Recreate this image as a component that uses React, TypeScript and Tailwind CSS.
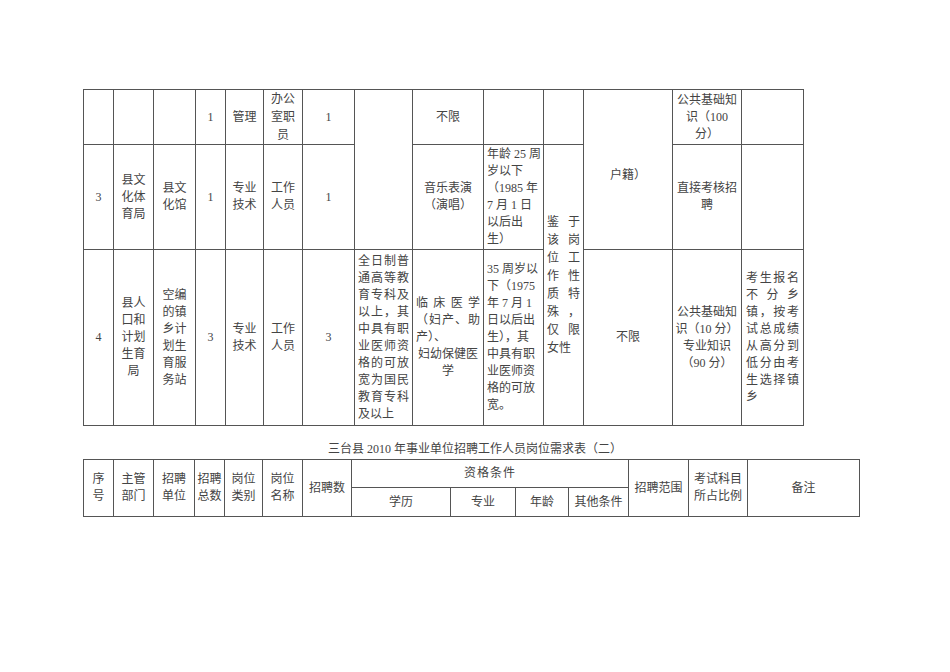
import React from 'react'

type CellProps = {
  children?: React.ReactNode
  rowSpan?: number
  colSpan?: number
  className?: string
}

// one bordered table cell, centred both ways by default
function Cell({ children, rowSpan, colSpan, className = '' }: CellProps) {
  return (
    <td
      rowSpan={rowSpan}
      colSpan={colSpan}
      className={`border border-[#555] p-0 align-middle text-center ${className}`}
    >
      {children}
    </td>
  )
}

// lines split on "/"
function Lines({ text }: { text: string }) {
  return (
    <>
      {text.split('/').map((l, i) => (
        <div key={i} className="whitespace-pre">
          {l}
        </div>
      ))}
    </>
  )
}

// justified lines, the last one left as in Word
function Justified({ text, className = '' }: { text: string; className?: string }) {
  const lines = text.split('/')
  return (
    <div className={className}>
      {lines.map((l, i) =>
        i === lines.length - 1 ? (
          <div key={i} className="text-left">
            {l}
          </div>
        ) : (
          <div key={i} className="flex justify-between">
            {[...l].map((c, j) => (
              <span key={j}>{c}</span>
            ))}
          </div>
        )
      )}
    </div>
  )
}

export default function App() {
  return (
    <div className="min-h-[672px] w-[950px] bg-white pl-[83px] pt-[89px] text-[12px] leading-[17px] text-[#444] font-['Liberation_Serif','Noto_Sans_CJK_SC',serif]">
      {/* continuation of table one */}
      <table className="w-[720px] table-fixed border-collapse">
        <colgroup>
          <col className="w-[30px]" />
          <col className="w-[40px]" />
          <col className="w-[42px]" />
          <col className="w-[30px]" />
          <col className="w-[38px]" />
          <col className="w-[39px]" />
          <col className="w-[52px]" />
          <col className="w-[58px]" />
          <col className="w-[71px]" />
          <col className="w-[60px]" />
          <col className="w-[40px]" />
          <col className="w-[89px]" />
          <col className="w-[69px]" />
          <col className="w-[62px]" />
        </colgroup>
        <tbody>
          <tr className="h-[55px]">
            <Cell />
            <Cell />
            <Cell />
            <Cell>1</Cell>
            <Cell>管理</Cell>
            <Cell className="leading-[18px]">
              <Lines text="办公/室职/员" />
            </Cell>
            <Cell>1</Cell>
            <Cell rowSpan={2} />
            <Cell>不限</Cell>
            <Cell />
            <Cell />
            <Cell rowSpan={2} className="pt-[12px]">
              户籍）
            </Cell>
            <Cell>
              <Lines text="公共基础知/识（100/分）" />
            </Cell>
            <Cell />
          </tr>
          <tr className="h-[105px]">
            <Cell>3</Cell>
            <Cell>
              <Lines text="县文/化体/育局" />
            </Cell>
            <Cell>
              <Lines text="县文/化馆" />
            </Cell>
            <Cell>1</Cell>
            <Cell>
              <Lines text="专业/技术" />
            </Cell>
            <Cell>
              <Lines text="工作/人员" />
            </Cell>
            <Cell>1</Cell>
            <Cell>
              <Lines text="音乐表演/（演唱）" />
            </Cell>
            <Cell className="pl-[3px] text-left">
              <Lines text="年龄 25 周/岁以下/（1985 年/7 月 1 日/以后出/生）" />
            </Cell>
            <Cell rowSpan={2} className="px-[3px] leading-[18px]">
              <Justified text="鉴于/该岗/位工/作性/质特/殊，/仅限/女性" />
            </Cell>
            <Cell>
              <Lines text="直接考核招/聘" />
            </Cell>
            <Cell />
          </tr>
          <tr className="h-[176px]">
            <Cell>4</Cell>
            <Cell>
              <Lines text="县人/口和/计划/生育/局" />
            </Cell>
            <Cell>
              <Lines text="空编/的镇/乡计/划生/育服/务站" />
            </Cell>
            <Cell>3</Cell>
            <Cell>
              <Lines text="专业/技术" />
            </Cell>
            <Cell>
              <Lines text="工作/人员" />
            </Cell>
            <Cell>3</Cell>
            <Cell className="px-[3px]">
              <Justified text="全日制普/通高等教/育专科及/以上，其/中具有职/业医师资/格的可放/宽为国民/教育专科/及以上" />
            </Cell>
            <Cell className="px-[3px]">
              <Justified text="临床医学/（妇产、助/产）、" />
              <Lines text="妇幼保健医/学" />
            </Cell>
            <Cell className="pl-[3px] text-left">
              <Lines text="35 周岁以/下（1975/年 7 月 1/日以后出/生），其/中具有职/业医师资/格的可放/宽。" />
            </Cell>
            <Cell>不限</Cell>
            <Cell>
              <Lines text="公共基础知/识（10 分）/专业知识/（90 分）" />
            </Cell>
            <Cell className="px-[4px]">
              <Justified text="考生报名/不分乡/镇，按考/试总成绩/从高分到/低分由考/生选择镇/乡" />
            </Cell>
          </tr>
        </tbody>
      </table>

      {/* table two heading */}
      <div className="w-[784px] pb-[1px] pt-[15px] text-center">
        三台县 2010 年事业单位招聘工作人员岗位需求表（二）
      </div>

      <table className="w-[776px] table-fixed border-collapse">
        <colgroup>
          <col className="w-[30px]" />
          <col className="w-[40px]" />
          <col className="w-[41px]" />
          <col className="w-[30px]" />
          <col className="w-[38px]" />
          <col className="w-[40px]" />
          <col className="w-[49px]" />
          <col className="w-[99px]" />
          <col className="w-[65px]" />
          <col className="w-[53px]" />
          <col className="w-[60px]" />
          <col className="w-[60px]" />
          <col className="w-[59px]" />
          <col className="w-[112px]" />
        </colgroup>
        <tbody>
          <tr className="h-[28px]">
            <Cell rowSpan={2}>
              <Lines text="序/号" />
            </Cell>
            <Cell rowSpan={2}>
              <Lines text="主管/部门" />
            </Cell>
            <Cell rowSpan={2}>
              <Lines text="招聘/单位" />
            </Cell>
            <Cell rowSpan={2}>
              <Lines text="招聘/总数" />
            </Cell>
            <Cell rowSpan={2}>
              <Lines text="岗位/类别" />
            </Cell>
            <Cell rowSpan={2}>
              <Lines text="岗位/名称" />
            </Cell>
            <Cell rowSpan={2}>招聘数</Cell>
            <Cell colSpan={4} className="tracking-[1px]">
              资格条件
            </Cell>
            <Cell rowSpan={2}>招聘范围</Cell>
            <Cell rowSpan={2}>
              <Lines text="考试科目/所占比例" />
            </Cell>
            <Cell rowSpan={2}>备注</Cell>
          </tr>
          <tr className="h-[29px]">
            <Cell>学历</Cell>
            <Cell>专业</Cell>
            <Cell>年龄</Cell>
            <Cell>其他条件</Cell>
          </tr>
        </tbody>
      </table>
    </div>
  )
}
